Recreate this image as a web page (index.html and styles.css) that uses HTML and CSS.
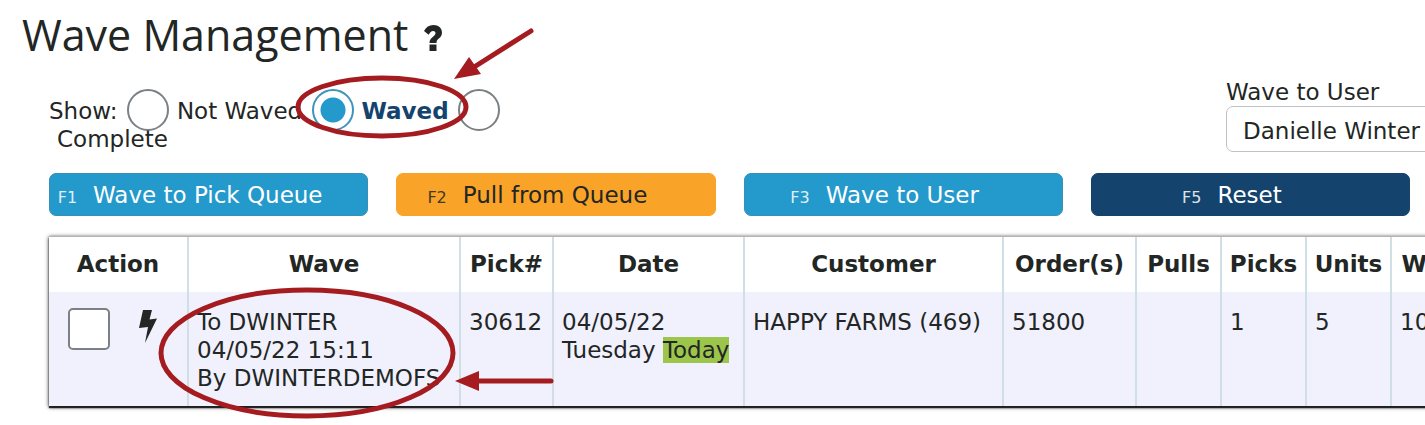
FILE: index.html
```html
<!DOCTYPE html>
<html lang="en">
<head>
    <meta charset="UTF-8">
    <meta name="viewport" content="width=device-width, initial-scale=1.0">
    <title>Wave Management</title>
    <link rel="stylesheet" href="styles.css">
</head>
<body>
    <header>
        <h1>Wave Management</h1>
        <a class="help" href="#help" aria-label="Help">
            <svg viewBox="0 0 18 26" width="18" height="26">
                <path d="M0 6C2 2 5 0 9.500 0C14.500 0 18 3 18 7.500C18 13.500 12.500 13 12.500 18H5.500C5.500 12 11.500 11.500 11.500 8.200C11.500 6.800 10.500 6 9 6C7.300 6 6 7.500 4.600 9.700Z"/>
                <rect x="5.500" y="19.500" width="7" height="6.500"/>
            </svg>
        </a>
    </header>

    <main>
        <div class="filters">
            <div class="show" role="radiogroup" aria-label="Show">
                Show:
                <input type="radio" name="show" id="notWaved"><label for="notWaved">Not Waved</label>
                <span class="marked"><input type="radio" name="show" id="waved" checked><label for="waved">Waved</label>
                    <svg class="mark mark-radio" viewBox="0 0 240 112" width="240" height="112">
                        <ellipse cx="87" cy="79" rx="84" ry="29"/>
                        <line x1="236" y1="3" x2="176" y2="41"/>
                        <polygon points="159,51 174,29 186,46"/>
                    </svg>
                </span>
                <input type="radio" name="show" id="complete"><label for="complete">Complete</label>
            </div>
            <div class="user">
                <label for="user">Wave to User</label>
                <select id="user">
                    <option>Danielle Winter</option>
                </select>
            </div>
        </div>

        <div class="actions">
            <button class="btn" type="button"><small>F1</small>Wave to Pick Queue</button>
            <button class="btn btn-warning" type="button"><small>F2</small>Pull from Queue</button>
            <button class="btn" type="button"><small>F3</small>Wave to User</button>
            <button class="btn btn-dark" type="button"><small>F5</small>Reset</button>
        </div>

        <table>
            <colgroup>
                <col class="col-action">
                <col class="col-wave">
                <col class="col-pick">
                <col class="col-date">
                <col class="col-customer">
                <col class="col-orders">
                <col class="col-count">
                <col class="col-count">
                <col class="col-count">
                <col class="col-weight">
            </colgroup>
            <thead>
                <tr>
                    <th>Action</th>
                    <th>Wave</th>
                    <th>Pick#</th>
                    <th>Date</th>
                    <th>Customer</th>
                    <th>Order(s)</th>
                    <th>Pulls</th>
                    <th>Picks</th>
                    <th>Units</th>
                    <th>Weight</th>
                </tr>
            </thead>
            <tbody>
                <tr>
                    <td>
                        <div class="row-action">
                            <input type="checkbox" aria-label="Select pick 30612">
                            <svg class="bolt" viewBox="0 0 18 33" width="18" height="33">
                                <path d="M4 0H13L10.500 9.500L18 8.500L6 33L9 17L0 18Z"/>
                            </svg>
                        </div>
                    </td>
                    <td class="marked">
                        To DWINTER<br>04/05/22 15:11<br>By DWINTERDEMOFS
                        <svg class="mark mark-cell" viewBox="0 0 400 134" width="400" height="134">
                            <ellipse cx="149" cy="67" rx="146" ry="63"/>
                            <line x1="393" y1="95" x2="320" y2="95"/>
                            <polygon points="297,95 321,85 321,105"/>
                        </svg>
                    </td>
                    <td>30612</td>
                    <td>04/05/22<br>Tuesday <mark>Today</mark></td>
                    <td>HAPPY FARMS (469)</td>
                    <td>51800</td>
                    <td></td>
                    <td>1</td>
                    <td>5</td>
                    <td>10</td>
                </tr>
            </tbody>
        </table>
    </main>
</body>
</html>
```
FILE: styles.css
```css
:root {
    --blue: #2499cb;
    --navy: #14436d;
    --orange: #faa329;
    --text: #222624;
    --mark: #a51c20;
    --line: #d0dee5;
}

* {
    box-sizing: border-box;
}

body {
    margin: 0;
    overflow: hidden;
    background: white;
    color: var(--text);
    font-family: "DejaVu Sans", Verdana, sans-serif;
    font-size: 23px;
    line-height: 28px;
}

header {
    display: flex;
    align-items: center;
    gap: 16px;
    padding: 5px 22px 0;
}

h1 {
    margin: 0;
    font-family: "Open Sans", "Segoe UI", sans-serif;
    font-size: 43px;
    font-weight: normal;
    line-height: 60px;
}

.help {
    display: flex;
    padding-top: 6px;
}

.help svg,
.bolt {
    fill: var(--text);
}

main {
    padding: 13px 15px 18px 49px;
}

.filters {
    display: flex;
    justify-content: space-between;
    height: 95px;
}

.show {
    width: 34%;
    padding-top: 19px;
}

.show label {
    display: inline-block;
    padding-left: 8px;
}

.show input {
    appearance: none;
    width: 42px;
    height: 42px;
    margin: -8px 0 -8px 2px;
    vertical-align: -4px;
    border: 2px solid #7b8084;
    border-radius: 50%;
    background: white;
}

.show input:checked {
    border-color: #3d94bd;
    background: radial-gradient(circle, var(--blue) 12px, white 13px);
}

.show input:checked + label {
    color: var(--navy);
    font-weight: bold;
}

.user {
    display: flex;
    flex-direction: column;
    width: 320px;
    margin-right: -136px;
}

.user select {
    appearance: none;
    height: 46px;
    padding: 3px 16px 0;
    border: 1px solid #bfc2c5;
    border-radius: 7px;
    background: white;
    color: inherit;
    font: inherit;
}

.actions {
    display: grid;
    grid-template-columns: repeat(4, minmax(0, 1fr));
    gap: 28px;
    margin-bottom: 20px;
}

.btn {
    height: 43px;
    padding: 3px 44px 0 7px;
    border: 1px solid #3b8fb7;
    border-radius: 7px;
    background: var(--blue);
    color: white;
    font: inherit;
    white-space: nowrap;
}

.btn small {
    margin-right: 16px;
    font-size: 16px;
    opacity: 0.85;
}

.btn-warning {
    border-color: var(--orange);
    background: var(--orange);
    color: var(--text);
}

.btn-dark {
    border-color: var(--navy);
    background: var(--navy);
}

table {
    width: max-content;
    table-layout: fixed;
    border-collapse: separate;
    border-spacing: 0;
    border-top: 1px solid #b4b4b4;
    box-shadow: 0 1px 4px 0 #111, 0 2px 1px 0 #333;
}

.col-action {
    width: 140px;
}

.col-wave {
    width: 272px;
}

.col-pick {
    width: 93px;
}

.col-date {
    width: 191px;
}

.col-customer {
    width: 259px;
}

.col-orders {
    width: 133px;
}

.col-count {
    width: 85px;
}

.col-weight {
    width: 113px;
}

th,
td {
    border-right: 2px solid var(--line);
    white-space: nowrap;
}

th {
    height: 55px;
    padding: 0 0 2px;
    background: white;
}

td {
    height: 114px;
    padding: 16px 8px 14px;
    background: #f1f0fd;
    vertical-align: top;
}

.row-action {
    display: flex;
    gap: 29px;
    padding-left: 11px;
}

.row-action svg {
    margin-top: 2px;
}

.row-action input {
    appearance: none;
    width: 42px;
    height: 42px;
    margin: 0;
    border: 2px solid #7b8084;
    border-radius: 5px;
    background: white;
}

mark {
    background: #9cc54c;
    color: inherit;
}

/* red callouts drawn over the page */
.marked {
    position: relative;
}

.mark {
    position: absolute;
    z-index: 1;
    overflow: visible;
    fill: none;
    stroke: var(--mark);
    stroke-width: 5;
    stroke-linecap: round;
    pointer-events: none;
}

.mark polygon {
    fill: var(--mark);
    stroke: none;
}

.mark-radio {
    top: -70px;
    left: -15px;
}

.mark-cell {
    top: -6px;
    left: -31px;
}
```
